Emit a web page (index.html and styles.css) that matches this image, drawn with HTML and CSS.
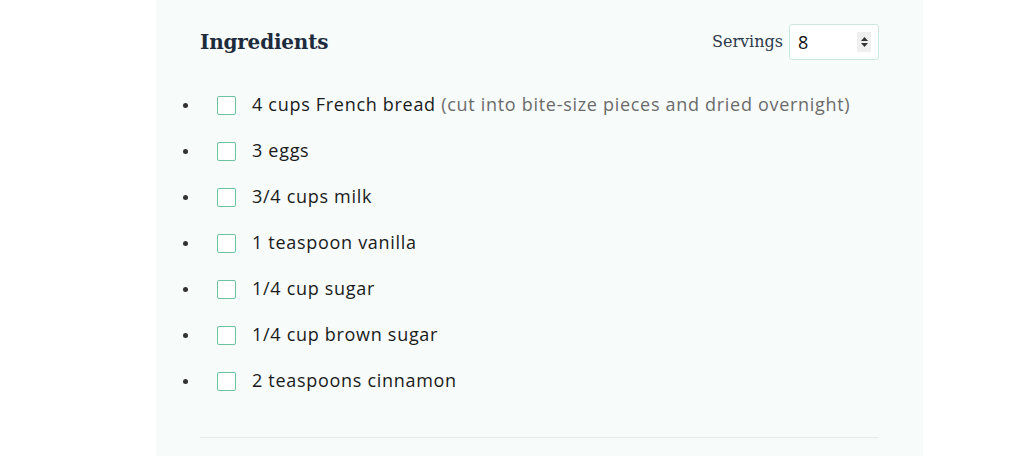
FILE: index.html
```html
<!DOCTYPE html>
<html lang="en">
<head>
<meta charset="utf-8">
<title>Ingredients</title>
<link rel="stylesheet" href="styles.css">
</head>
<body>
<section class="panel">
  <header class="head">
    <h2 class="title">Ingredients</h2>
    <label class="servings">
      <span class="servings-label">Servings</span>
      <span class="num-wrap">
        <input class="num" type="number" value="8" min="1">
        <span class="spin"><svg width="9" height="14" viewBox="0 0 9 14"><path d="M4.5 2 L8 6 H1 Z" fill="#333"/><path d="M4.5 12 L8 8 H1 Z" fill="#333"/></svg></span>
      </span>
    </label>
  </header>
  <ul class="list">
    <li><label class="item"><span class="box"></span>4 cups French bread <span class="note">(cut into bite-size pieces and dried overnight)</span></label></li>
    <li><label class="item"><span class="box"></span>3 eggs</label></li>
    <li><label class="item"><span class="box"></span>3/4 cups milk</label></li>
    <li><label class="item"><span class="box"></span>1 teaspoon vanilla</label></li>
    <li><label class="item"><span class="box"></span>1/4 cup sugar</label></li>
    <li><label class="item"><span class="box"></span>1/4 cup brown sugar</label></li>
    <li><label class="item"><span class="box"></span>2 teaspoons cinnamon</label></li>
  </ul>
  <hr class="rule">
</section>
</body>
</html>
```

FILE: styles.css
```css
html, body {
  margin: 0;
  padding: 0;
  background: #ffffff;
}
body {
  height: 456px;
  overflow: hidden;
}
.panel {
  margin-left: 156px;
  width: 767px;
  height: 456px;
  background: #f7fbfa;
  box-sizing: border-box;
  padding: 24px 44px 0 44px;
}
.head {
  display: flex;
  align-items: center;
  justify-content: space-between;
  height: 35px;
}
.title {
  margin: 0;
  font-family: "DejaVu Serif", serif;
  font-weight: bold;
  font-size: 20px;
  color: #1e2b3c;
  letter-spacing: -0.2px;
}
.servings {
  display: flex;
  align-items: center;
  gap: 6px;
}
.servings-label {
  font-family: "DejaVu Serif", serif;
  font-size: 16px;
  color: #2c3a4c;
}
.num-wrap {
  position: relative;
  display: block;
}
.num {
  display: block;
  width: 90px;
  height: 36px;
  box-sizing: border-box;
  border: 1px solid #c9e9dd;
  border-radius: 3px;
  background: #fff;
  padding: 0 0 0 8px;
  font-family: "Open Sans", sans-serif;
  font-size: 18px;
  color: #111;
  -moz-appearance: textfield;
  outline: none;
}
.num::-webkit-outer-spin-button,
.num::-webkit-inner-spin-button {
  -webkit-appearance: none;
  margin: 0;
}
.spin {
  position: absolute;
  right: 8px;
  top: 8px;
  width: 14px;
  height: 20px;
  background: #efefef;
  display: flex;
  align-items: center;
  justify-content: center;
}
.list {
  margin: 22px 0 0 0;
  padding: 0;
  list-style: disc outside;
  font-family: "Open Sans", sans-serif;
  font-size: 18px;
  letter-spacing: 0.7px;
  color: #1a1a1a;
}
.list li {
  line-height: 46px;
  height: 46px;
}
.list li::marker {
  font-size: 14px;
  color: #333;
}
.item {
  padding-left: 17px;
}
.box {
  display: inline-block;
  vertical-align: middle;
  position: relative;
  top: -1px;
  width: 17px;
  height: 17px;
  border: 1.5px solid #6cc3a0;
  border-radius: 2px;
  background: #fff;
  margin-right: 16px;
}
.note {
  color: #6b6b6b;
}
.rule {
  margin: 34px 0 0 0;
  border: 0;
  height: 1px;
  background: #e3eeeb;
}
```
